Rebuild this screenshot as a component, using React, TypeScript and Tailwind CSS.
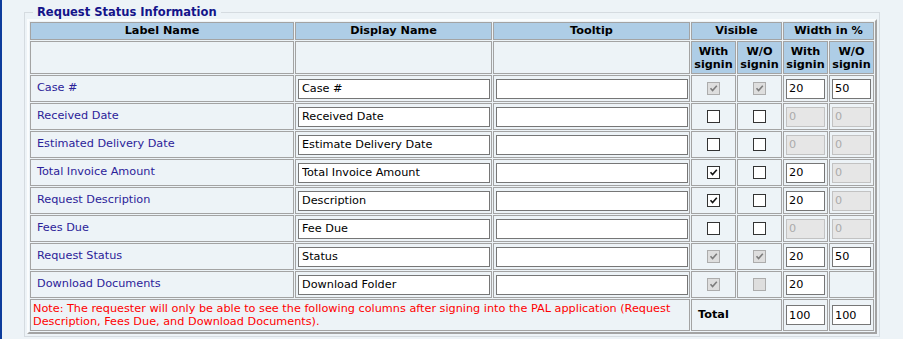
import clsx from "clsx";

type Check = "on" | "off" | "lockedOn" | "lockedOff";

type Num = { disabled: boolean; value: string } | null;

type Row = {
  display: string;
  label: string;
  vis: [Check, Check];
  width: [Num, Num];
};

const n = (value: string): Num => ({ disabled: false, value });
const d = (value: string): Num => ({ disabled: true, value });

const rows: Row[] = [
  { label: "Case #", display: "Case #", vis: ["lockedOn", "lockedOn"], width: [n("20"), n("50")] },
  { label: "Received Date", display: "Received Date", vis: ["off", "off"], width: [d("0"), d("0")] },
  { label: "Estimated Delivery Date", display: "Estimate Delivery Date", vis: ["off", "off"], width: [d("0"), d("0")] },
  { label: "Total Invoice Amount", display: "Total Invoice Amount", vis: ["on", "off"], width: [n("20"), d("0")] },
  { label: "Request Description", display: "Description", vis: ["on", "off"], width: [n("20"), d("0")] },
  { label: "Fees Due", display: "Fee Due", vis: ["off", "off"], width: [d("0"), d("0")] },
  { label: "Request Status", display: "Status", vis: ["lockedOn", "lockedOn"], width: [n("20"), n("50")] },
  { label: "Download Documents", display: "Download Folder", vis: ["lockedOn", "lockedOff"], width: [n("20"), null] },
];

const cell = "border border-[#a3a3a3]";
const head = "border border-[#a3a3a3] bg-[#aecde6] p-0 text-center font-bold text-black";

function CheckBox({ state }: { state: Check }) {
  const locked = state === "lockedOn" || state === "lockedOff";
  const checked = state === "on" || state === "lockedOn";
  return (
    <span
      className={clsx(
        "inline-flex h-[13px] w-[13px] items-center justify-center border align-middle",
        locked ? "border-[#acacac] bg-[#dedede]" : "border-[#333333] bg-white",
      )}
    >
      {checked && (
        <svg viewBox="0 0 11 11" className="h-[11px] w-[11px]">
          <path
            d="M2.5 5.2 L4.6 7.5 L8.8 2.8"
            fill="none"
            stroke={locked ? "#7c7c7c" : "#111111"}
            strokeWidth="1.6"
          />
        </svg>
      )}
    </span>
  );
}

function TextBox({ value }: { value: string }) {
  return (
    <input
      className="block h-[20px] w-[192px] border border-[#767676] bg-white px-[3px] text-[11.25px] text-black outline-none"
      readOnly
      value={value}
    />
  );
}

function NumBox({ num }: { num: Num }) {
  if (!num) return null;
  return (
    <input
      className={clsx(
        "block h-[20px] w-[39px] border px-[2px] text-[11.25px] outline-none",
        num.disabled ? "border-[#c2c2c2] bg-[#e6e6e6] text-[#ababab]" : "border-[#767676] bg-white text-black",
      )}
      readOnly
      value={num.value}
    />
  );
}

export default function App() {
  return (
    <div className="h-[339px] w-full border-l-2 border-[#0d3c9c] bg-[#edf3f7] pt-[6px] pl-[22px] font-['DejaVu_Sans',Verdana,sans-serif] text-[11.25px]">
      <fieldset className="w-[856px] border border-[#d5dbe0] px-[2px] pb-[2px]">
        <legend className="ml-[6px] px-[4px] text-[11.5px] leading-[12px] font-bold text-[#14148a]">
          Request Status Information
        </legend>
        <table className="mt-px w-[850px] table-fixed border-separate border-spacing-[1px] border-2 border-t-[#fafcfd] border-r-[#a3a3a3] border-b-[#a3a3a3] border-l-[#fafcfd]">
          <colgroup>
            <col className="w-[264px]" />
            <col className="w-[197px]" />
            <col className="w-[197px]" />
            <col className="w-[45px]" />
            <col className="w-[45px]" />
            <col className="w-[45px]" />
            <col className="w-[45px]" />
          </colgroup>
          <thead>
            <tr>
              <th className={clsx(head, "h-[18px] leading-[16px]")}>Label Name</th>
              <th className={clsx(head, "leading-[16px]")}>Display Name</th>
              <th className={clsx(head, "leading-[16px]")}>Tooltip</th>
              <th className={clsx(head, "leading-[16px]")} colSpan={2}>Visible</th>
              <th className={clsx(head, "leading-[16px]")} colSpan={2}>Width in %</th>
            </tr>
            <tr>
              <td className={clsx(cell, "h-[33px]")} />
              <td className={cell} />
              <td className={cell} />
              {["With", "W/O", "With", "W/O"].map((top, i) => (
                <th className={clsx(head, "leading-[13px] whitespace-nowrap")} key={i}>
                  {top}
                  <br />
                  signin
                </th>
              ))}
            </tr>
          </thead>
          <tbody>
            {rows.map((row) => (
              <tr key={row.label}>
                <td className={clsx(cell, "h-[27px] px-[6px] py-0 text-[#2b2299]")}>{row.label}</td>
                <td className={clsx(cell, "py-0 pl-[2px]")}>
                  <TextBox value={row.display} />
                </td>
                <td className={clsx(cell, "py-0 pl-[2px]")}>
                  <TextBox value="" />
                </td>
                <td className={clsx(cell, "p-0 text-center")}>
                  <CheckBox state={row.vis[0]} />
                </td>
                <td className={clsx(cell, "p-0 text-center")}>
                  <CheckBox state={row.vis[1]} />
                </td>
                <td className={clsx(cell, "py-0 pl-[2px]")}>
                  <NumBox num={row.width[0]} />
                </td>
                <td className={clsx(cell, "py-0 pl-[2px]")}>
                  <NumBox num={row.width[1]} />
                </td>
              </tr>
            ))}
            <tr>
              <td className={clsx(cell, "h-[32px] px-[2px] py-0 leading-[13px] text-[#ff0000]")} colSpan={3}>
                Note: The requester will only be able to see the following columns after signing into the PAL
                application (Request Description, Fees Due, and Download Documents).
              </td>
              <td className={clsx(cell, "py-0 pl-[6px] font-bold text-black")} colSpan={2}>
                Total
              </td>
              <td className={clsx(cell, "py-0 pl-[2px]")}>
                <NumBox num={n("100")} />
              </td>
              <td className={clsx(cell, "py-0 pl-[2px]")}>
                <NumBox num={n("100")} />
              </td>
            </tr>
          </tbody>
        </table>
      </fieldset>
    </div>
  );
}
